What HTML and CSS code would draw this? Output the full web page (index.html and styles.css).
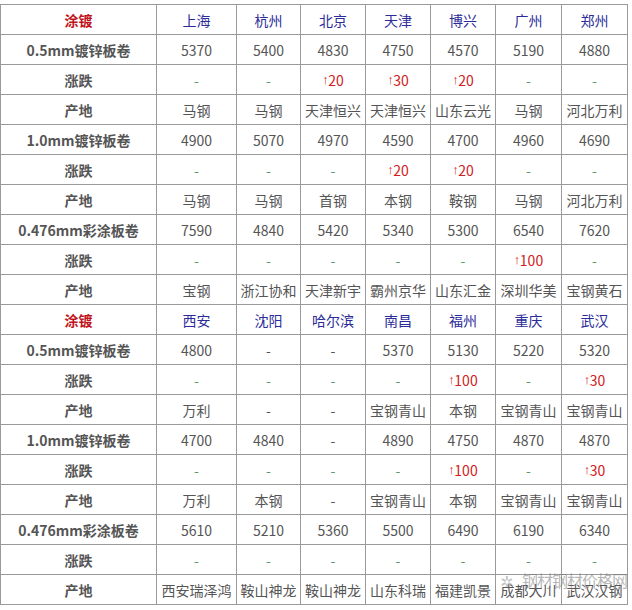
FILE: index.html
```html
<!DOCTYPE html>
<html lang="zh">
<head>
<meta charset="utf-8">
<link rel="stylesheet" href="styles.css">
</head>
<body>
<div class="wrap">
<table class="price">
<colgroup>
<col class="c0"><col class="c1"><col class="c2"><col class="c3"><col class="c4"><col class="c5"><col class="c6"><col class="c7">
</colgroup>
<tbody>
<tr class="head"><th class="lbl red">涂镀</th><td>上海</td><td>杭州</td><td>北京</td><td>天津</td><td>博兴</td><td>广州</td><td>郑州</td></tr>
<tr><th class="lbl">0.5mm镀锌板卷</th><td>5370</td><td>5400</td><td>4830</td><td>4750</td><td>4570</td><td>5190</td><td>4880</td></tr>
<tr class="chg"><th class="lbl">涨跌</th><td>-</td><td>-</td><td class="up"><span class="ar">↑</span>20</td><td class="up"><span class="ar">↑</span>30</td><td class="up"><span class="ar">↑</span>20</td><td>-</td><td>-</td></tr>
<tr><th class="lbl">产地</th><td>马钢</td><td>马钢</td><td>天津恒兴</td><td>天津恒兴</td><td>山东云光</td><td>马钢</td><td>河北万利</td></tr>
<tr><th class="lbl">1.0mm镀锌板卷</th><td>4900</td><td>5070</td><td>4970</td><td>4590</td><td>4700</td><td>4960</td><td>4690</td></tr>
<tr class="chg"><th class="lbl">涨跌</th><td>-</td><td>-</td><td>-</td><td class="up"><span class="ar">↑</span>20</td><td class="up"><span class="ar">↑</span>20</td><td>-</td><td>-</td></tr>
<tr><th class="lbl">产地</th><td>马钢</td><td>马钢</td><td>首钢</td><td>本钢</td><td>鞍钢</td><td>马钢</td><td>河北万利</td></tr>
<tr><th class="lbl">0.476mm彩涂板卷</th><td>7590</td><td>4840</td><td>5420</td><td>5340</td><td>5300</td><td>6540</td><td>7620</td></tr>
<tr class="chg"><th class="lbl">涨跌</th><td>-</td><td>-</td><td>-</td><td>-</td><td>-</td><td class="up"><span class="ar">↑</span>100</td><td>-</td></tr>
<tr><th class="lbl">产地</th><td>宝钢</td><td>浙江协和</td><td>天津新宇</td><td>霸州京华</td><td>山东汇金</td><td>深圳华美</td><td>宝钢黄石</td></tr>
<tr class="head"><th class="lbl red">涂镀</th><td>西安</td><td>沈阳</td><td>哈尔滨</td><td>南昌</td><td>福州</td><td>重庆</td><td>武汉</td></tr>
<tr><th class="lbl">0.5mm镀锌板卷</th><td>4800</td><td>-</td><td>-</td><td>5370</td><td>5130</td><td>5220</td><td>5320</td></tr>
<tr class="chg"><th class="lbl">涨跌</th><td>-</td><td>-</td><td>-</td><td>-</td><td class="up"><span class="ar">↑</span>100</td><td>-</td><td class="up"><span class="ar">↑</span>30</td></tr>
<tr><th class="lbl">产地</th><td>万利</td><td>-</td><td>-</td><td>宝钢青山</td><td>本钢</td><td>宝钢青山</td><td>宝钢青山</td></tr>
<tr><th class="lbl">1.0mm镀锌板卷</th><td>4700</td><td>4840</td><td>-</td><td>4890</td><td>4750</td><td>4870</td><td>4870</td></tr>
<tr class="chg"><th class="lbl">涨跌</th><td>-</td><td>-</td><td>-</td><td>-</td><td class="up"><span class="ar">↑</span>100</td><td>-</td><td class="up"><span class="ar">↑</span>30</td></tr>
<tr><th class="lbl">产地</th><td>万利</td><td>本钢</td><td>-</td><td>宝钢青山</td><td>本钢</td><td>宝钢青山</td><td>宝钢青山</td></tr>
<tr><th class="lbl">0.476mm彩涂板卷</th><td>5610</td><td>5210</td><td>5360</td><td>5500</td><td>6490</td><td>6190</td><td>6340</td></tr>
<tr class="chg"><th class="lbl">涨跌</th><td>-</td><td>-</td><td>-</td><td>-</td><td>-</td><td>-</td><td>-</td></tr>
<tr><th class="lbl">产地</th><td>西安瑞泽鸿</td><td>鞍山神龙</td><td>鞍山神龙</td><td>山东科瑞</td><td>福建凯景</td><td>成都大川</td><td>武汉汉钢</td></tr>
</tbody>
</table>
<div class="mark"><span class="mk-icon">✲</span><span class="mk-t1">钢材钢材价格网</span></div>
</div>
</body>
</html>
```
FILE: styles.css
```css
html, body {
  margin: 0;
  padding: 0;
  background: #fff;
}
body {
  font-family: "Noto Sans CJK SC", "Noto Sans", "DejaVu Sans", sans-serif;
  font-size: 14px;
  color: #555;
}
.wrap {
  position: relative;
  padding-top: 4px;
  width: 632px;
}
.price {
  border-collapse: collapse;
  table-layout: fixed;
  width: 627px;
  border: 1px solid #333;
}
.c0 { width: 156px; }
.c1 { width: 80px; }
.c2 { width: 64px; }
.c3, .c4, .c5 { width: 65px; }
.c6, .c7 { width: 66px; }
.price th, .price td {
  height: 30px;
  box-sizing: border-box;
  padding: 0;
  border: 1px solid #9a9a9a;
  text-align: center;
  vertical-align: middle;
  white-space: nowrap;
  overflow: hidden;
  line-height: 20px;
}
.price .lbl {
  font-weight: bold;
  color: #555;
  font-size: 14px;
}
.price .lbl.red {
  color: #c0141c;
}
.head td {
  color: #2b2b9a;
}
.chg td {
  color: #5a9a6a;
}
.chg td.up {
  color: #d02020;
}
.ar {
  font-family: "Liberation Sans", sans-serif;
  font-size: 13px;
  display: inline-block;
  width: 6px;
  overflow: hidden;
  vertical-align: top;
}
.mark {
  position: absolute;
  left: 500px;
  top: 570px;
  width: 128px;
  height: 22px;
  color: rgba(120, 120, 120, 0.45);
  pointer-events: none;
}
.mk-icon {
  position: absolute;
  left: 0;
  top: 2px;
  font-size: 16px;
  line-height: 18px;
}
.mk-t1 {
  position: absolute;
  left: 22px;
  top: 0;
  font-size: 16px;
  line-height: 20px;
  letter-spacing: -1px;
  color: rgba(110, 110, 110, 0.5);
}
```
